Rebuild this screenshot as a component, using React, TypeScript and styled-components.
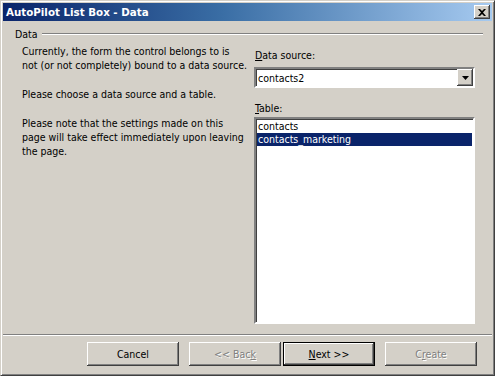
import styled, { createGlobalStyle } from 'styled-components';

const GlobalStyle = createGlobalStyle`
    html, body {
        margin: 0;
        padding: 0;
        background: #ffffff;
    }
    body {
        font-family: "DejaVu Sans", "Liberation Sans", sans-serif;
        font-stretch: condensed;
        font-size: 10.5px;
    }
`;

const StyledWindow = styled.div`
    box-sizing: border-box;
    margin: 0;
    width: 495px;
    height: 376px;
    background: #d4d0c8;
    border-top: 1px solid #d4d0c8;
    border-left: 1px solid #d4d0c8;
    border-right: 1px solid #404040;
    border-bottom: 1px solid #404040;
    box-shadow: inset 1px 1px 0 #ffffff, inset -1px -1px 0 #808080;
    padding: 2px;
    display: flex;
    flex-direction: column;
`;

const StyledTitleBar = styled.div`
    height: 18px;
    display: flex;
    align-items: center;
    justify-content: space-between;
    padding: 0 2px 0 3px;
    background: linear-gradient(to right, #0a246a 0%, #3a6ea5 45%, #a6caf0 100%);
`;

const StyledTitle = styled.span`
    color: #ffffff;
    font-family: "DejaVu Sans", sans-serif;
    font-stretch: normal;
    font-weight: bold;
    font-size: 10.3px;
`;

const StyledCloseBtn = styled.button`
    box-sizing: border-box;
    width: 16px;
    height: 14px;
    padding: 0;
    background: #d4d0c8;
    border: none;
    box-shadow: inset -1px -1px 0 #404040, inset 1px 1px 0 #ffffff, inset -2px -2px 0 #808080;
    display: flex;
    align-items: center;
    justify-content: center;
`;

const StyledBody = styled.div`
    flex: 1;
    display: flex;
    flex-direction: column;
    padding: 6px 7px 0 7px;
`;

const StyledGroupHeader = styled.div`
    display: flex;
    align-items: center;
    gap: 4px;
    color: #000;
    padding-left: 5px;
    line-height: 14px;
`;

const StyledRule = styled.div`
    flex: 1;
    height: 0;
    border-top: 1px solid #808080;
    border-bottom: 1px solid #ffffff;
    margin-right: 2px;
`;

const StyledColumns = styled.div`
    flex: 1;
    display: grid;
    grid-template-columns: 224px 221px;
    column-gap: 8px;
    padding: 1px 0 0 12px;
`;

const StyledInfo = styled.div`
    display: flex;
    flex-direction: column;
    gap: 15px;
    padding-top: 2px;
`;

const StyledPara = styled.p`
    margin: 0;
    line-height: 14px;
    color: #000;
    white-space: nowrap;
`;

const StyledRight = styled.div`
    display: flex;
    flex-direction: column;
`;

const StyledLabel = styled.label<{ $before: number; $after: number }>`
    line-height: 14px;
    margin: ${(p) => p.$before}px 0 ${(p) => p.$after}px 1px;
`;

const StyledCombo = styled.div`
    box-sizing: border-box;
    height: 21px;
    background: #ffffff;
    border: 2px solid;
    border-color: #808080 #ffffff #ffffff #808080;
    box-shadow: inset 1px 1px 0 #404040;
    display: flex;
    align-items: center;
    padding-left: 2px;
`;

const StyledComboText = styled.span`
    flex: 1;
`;

const StyledDropBtn = styled.div`
    box-sizing: border-box;
    width: 16px;
    height: 17px;
    background: #d4d0c8;
    box-shadow: inset -1px -1px 0 #404040, inset 1px 1px 0 #ffffff, inset -2px -2px 0 #808080;
    display: flex;
    align-items: center;
    justify-content: center;
`;

const StyledListBox = styled.div`
    box-sizing: border-box;
    height: 207px;
    background: #ffffff;
    border: 2px solid;
    border-color: #808080 #ffffff #ffffff #808080;
    box-shadow: inset 1px 1px 0 #404040;
    padding: 1px;
`;

const StyledListItem = styled.div<{ $selected?: boolean }>`
    height: 13px;
    line-height: 13px;
    padding-left: 1px;
    background: ${(p) => (p.$selected ? '#0a246a' : 'transparent')};
    color: ${(p) => (p.$selected ? '#ffffff' : '#000000')};
`;

const StyledFooterRule = styled.div`
    height: 0;
    border-top: 1px solid #808080;
    border-bottom: 1px solid #ffffff;
    margin: 0 -7px;
`;

const StyledFooter = styled.div`
    display: flex;
    gap: 10px;
    padding: 6px 0 7px 77px;
`;

const StyledButton = styled.button<{ $default?: boolean; $gap?: number }>`
    box-sizing: border-box;
    width: 92px;
    height: 24px;
    margin-left: ${(p) => p.$gap ?? 0}px;
    background: #d4d0c8;
    font-family: inherit;
    font-stretch: condensed;
    font-size: 10.5px;
    color: ${(p) => (p.disabled ? '#808080' : '#000000')};
    text-shadow: ${(p) => (p.disabled ? '1px 1px 0 #ffffff' : 'none')};
    border: ${(p) => (p.$default ? '1px solid #000000' : 'none')};
    box-shadow: inset -1px -1px 0 #404040, inset 1px 1px 0 #ffffff, inset -2px -2px 0 #808080;
    padding: 0;
`;

function App() {
    return (
        <>
            <GlobalStyle />
            <StyledWindow>
                <StyledTitleBar>
                    <StyledTitle>AutoPilot List Box - Data</StyledTitle>
                    <StyledCloseBtn>
                        <svg width="8" height="7" viewBox="0 0 8 7">
                            <path d="M0 0h2l2 2 2-2h2L5 3.5 8 7H6L4 5 2 7H0l3-3.5z" fill="#000" />
                        </svg>
                    </StyledCloseBtn>
                </StyledTitleBar>
                <StyledBody>
                    <StyledGroupHeader>
                        Data
                        <StyledRule />
                    </StyledGroupHeader>
                    <StyledColumns>
                        <StyledInfo>
                            <StyledPara>
                                Currently, the form the control belongs to is
                                <br />
                                not (or not completely) bound to a data source.
                            </StyledPara>
                            <StyledPara>Please choose a data source and a table.</StyledPara>
                            <StyledPara>
                                Please note that the settings made on this
                                <br />
                                page will take effect immediately upon leaving
                                <br />
                                the page.
                            </StyledPara>
                        </StyledInfo>
                        <StyledRight>
                            <StyledLabel $before={6} $after={5}>
                                <u>D</u>ata source:
                            </StyledLabel>
                            <StyledCombo>
                                <StyledComboText>contacts2</StyledComboText>
                                <StyledDropBtn>
                                    <svg width="7" height="4" viewBox="0 0 7 4">
                                        <path d="M0 0h7L3.5 4z" fill="#000" />
                                    </svg>
                                </StyledDropBtn>
                            </StyledCombo>
                            <StyledLabel $before={13} $after={2}>
                                <u>T</u>able:
                            </StyledLabel>
                            <StyledListBox>
                                <StyledListItem>contacts</StyledListItem>
                                <StyledListItem $selected>contacts_marketing</StyledListItem>
                            </StyledListBox>
                        </StyledRight>
                    </StyledColumns>
                    <StyledFooterRule />
                    <StyledFooter>
                        <StyledButton>Cancel</StyledButton>
                        <StyledButton disabled>
                            &lt;&lt; Bac<u>k</u>
                        </StyledButton>
                        <StyledButton $default $gap={-8}>
                            <u>N</u>ext &gt;&gt;
                        </StyledButton>
                        <StyledButton disabled>
                            C<u>r</u>eate
                        </StyledButton>
                    </StyledFooter>
                </StyledBody>
            </StyledWindow>
        </>
    );
}

export default App;
